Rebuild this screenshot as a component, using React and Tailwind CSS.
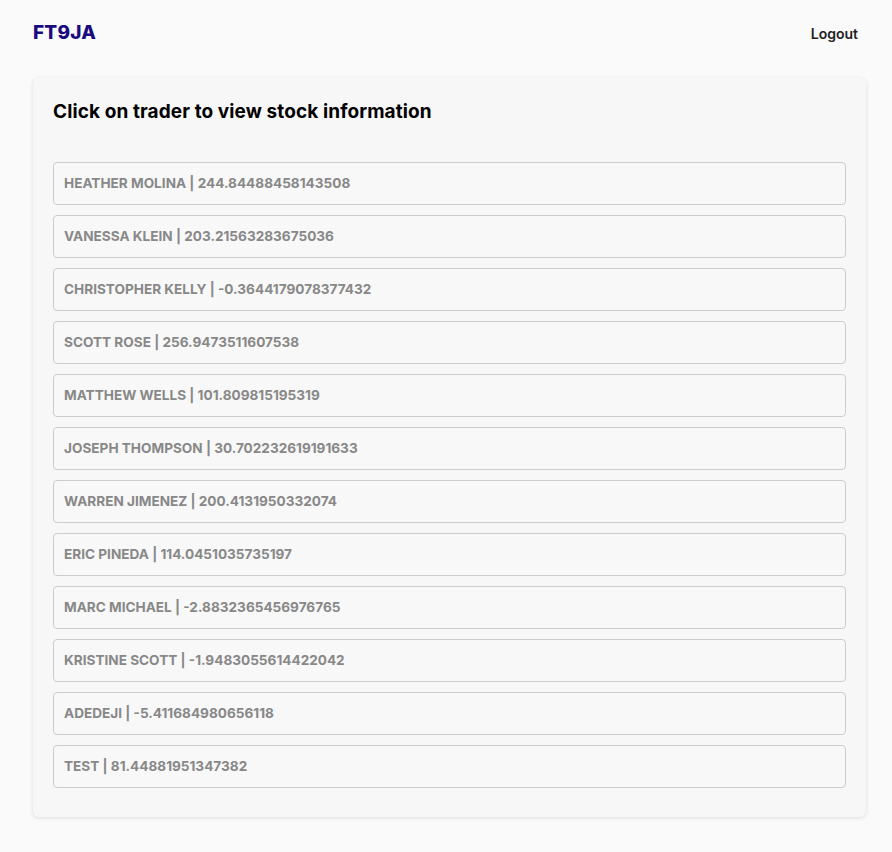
const traders = [
  "HEATHER MOLINA | 244.84488458143508",
  "VANESSA KLEIN | 203.21563283675036",
  "CHRISTOPHER KELLY | -0.3644179078377432",
  "SCOTT ROSE | 256.9473511607538",
  "MATTHEW WELLS | 101.809815195319",
  "JOSEPH THOMPSON | 30.702232619191633",
  "WARREN JIMENEZ | 200.4131950332074",
  "ERIC PINEDA | 114.0451035735197",
  "MARC MICHAEL | -2.8832365456976765",
  "KRISTINE SCOTT | -1.9483055614422042",
  "ADEDEJI | -5.411684980656118",
  "TEST | 81.44881951347382",
];

export default function App() {
  return (
    <div className="min-h-[852px] bg-[#fafafa] font-['Inter',sans-serif]">
      <header className="flex items-center justify-between px-[33px] h-[66px]">
        <div className="text-[19px] font-extrabold text-[#1a0a80] tracking-[0.2px]">FT9JA</div>
        <button className="text-[14px] font-semibold text-[#222] mr-[1px]">Logout</button>
      </header>
      <div className="ml-[33px] mr-[26px] mt-[12px] rounded-[6px] bg-[#f7f7f7] shadow-[0_1px_4px_rgba(0,0,0,0.12)] px-[20px] pt-[20px] pb-[29px]">
        <h1 className="text-[19px] leading-[28px] font-bold text-black tracking-[0.1px]">Click on trader to view stock information</h1>
        <div className="mt-[36px] flex flex-col gap-[10px]">
          {traders.map((t) => (
            <div key={t} className="h-[43px] flex items-center rounded-[4px] border border-[#cccccc] bg-[#f8f8f8] px-[10px] text-[13.6px] font-bold text-[#888888]">
              {t}
            </div>
          ))}
        </div>
      </div>
    </div>
  );
}
